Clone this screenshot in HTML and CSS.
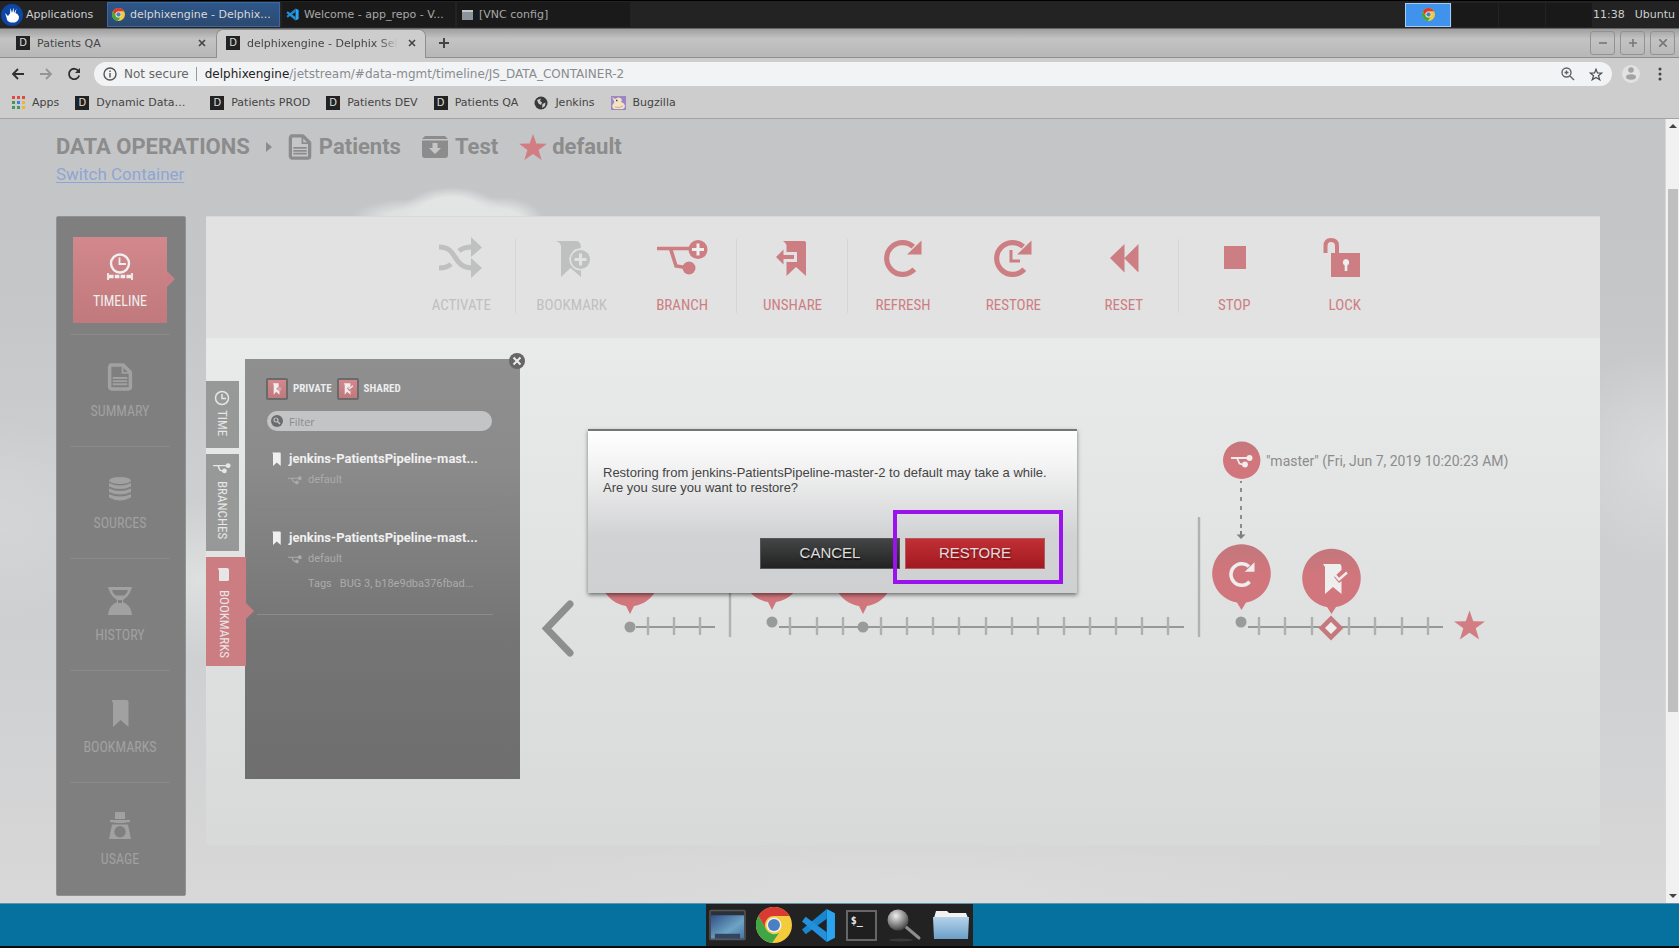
FILE: index.html
```html
<!DOCTYPE html>
<html lang="en">
<head>
<meta charset="utf-8">
<title>delphixengine - Delphix Self-Service</title>
<link rel="stylesheet" href="styles.css">
</head>
<body>
<svg class="defs" width="0" height="0" aria-hidden="true">
  <defs>
    <linearGradient id="pin" x1="0" y1="0" x2="0" y2="1"><stop offset="0" stop-color="#c3777c"/><stop offset=".45" stop-color="#d1767c"/><stop offset="1" stop-color="#d1767c"/></linearGradient>
    <linearGradient id="desk" x1="0" y1="0" x2="1" y2="1"><stop offset="0" stop-color="#2f4f86"/><stop offset=".6" stop-color="#6ea3c4"/><stop offset="1" stop-color="#4772a4"/></linearGradient>
    <linearGradient id="folder" x1="0" y1="0" x2="0" y2="1"><stop offset="0" stop-color="#b5d3ea"/><stop offset="1" stop-color="#6b9fc9"/></linearGradient>
    <radialGradient id="lens" cx=".4" cy=".3" r=".7"><stop offset="0" stop-color="#eee"/><stop offset=".6" stop-color="#8a8a8a"/><stop offset="1" stop-color="#444"/></radialGradient>
    <symbol id="chrome" viewBox="0 0 36 36">
      <circle cx="18" cy="18" r="18" fill="#f3cb3c"/>
      <path d="M2.4 9A18 18 0 0 1 33.6 9H18a9 9 0 0 0-7.8 13.500Z" fill="#db3a33"/>
      <path d="M2.400 9 10.200 22.500a9 9 0 0 0 13 3.200L16 35.900A18 18 0 0 1 2.400 9Z" fill="#3fa648"/>
      <circle cx="18" cy="18" r="7.500" fill="#f1f1f1"/><circle cx="18" cy="18" r="6" fill="#4a7fc4"/>
    </symbol>
    <symbol id="vscode" viewBox="0 0 34 34">
      <path d="M25 1 33 5V29L25 33Z" fill="#2aa4ee"/>
      <path d="M25 1 1 21 4.500 25.500 25 10.500Z" fill="#1a86cf"/>
      <path d="M25 33 1 13 4.500 8.500 25 23.500Z" fill="#2290da"/>
    </symbol>
    <symbol id="doc" viewBox="0 0 24 27">
      <path d="M3 2H15L22 9V23a2 2 0 0 1-2 2H4a2 2 0 0 1-2-2V4Z" fill="none" stroke="currentColor" stroke-width="3.400" stroke-linejoin="round"/>
      <path d="M14.500 3V9.500H21" fill="none" stroke="currentColor" stroke-width="1.800"/>
      <path d="M5 14.500H19M5 17.500H19M5 20.500H19" stroke="currentColor" stroke-width="1.800"/>
    </symbol>
    <symbol id="star" viewBox="0 0 30 28"><path d="M15 0 18.600 10.300 30 10.600 21 17.200 24.300 28 15 21.500 5.700 28 9 17.200 0 10.600 11.400 10.300Z" fill="currentColor"/></symbol>
    <symbol id="branch" viewBox="0 0 22 13">
      <path d="M0 3H17M6 3 8.500 8.500 13 10" fill="none" stroke="currentColor" stroke-width="1.800"/>
      <circle cx="18.500" cy="3" r="3" fill="currentColor"/><circle cx="14" cy="9.500" r="2.900" fill="currentColor"/>
    </symbol>
    <symbol id="mark" viewBox="0 0 17 28"><path d="M0 1H15Q17 1 17 3V28L9 21 1.500 28V4Z" fill="currentColor"/></symbol>
    <symbol id="redo" viewBox="0 0 37 36"><path d="M29.500 28.500A15.500 15.500 0 1 1 28.500 6.500" fill="none" stroke="currentColor" stroke-width="5"/><path d="M36.500 .5V14H22.500Z" fill="currentColor"/></symbol>
  </defs>
</svg>

<header class="topbar">
  <button class="apps">
    <svg width="22" height="22" viewBox="0 0 22 22"><circle cx="11" cy="11" r="11" fill="#0d47a6"/><path d="M4 9 5.500 13.500Q6 18 10 18.500H14Q18 17 18 12.500 17 9.500 14.500 9L15.500 4.500 13 9 12.500 3.500 11 9 9.500 4 9 9.500 7 12Z" fill="#fff"/></svg>
    Applications</button>
  <nav class="tasks">
    <button class="task on"><svg width="13" height="13"><use href="#chrome"/></svg><span>delphixengine - Delphix...</span></button>
    <button class="task"><svg width="13" height="13"><use href="#vscode"/></svg><span>Welcome - app_repo - V...</span></button>
    <button class="task"><svg width="13" height="12" viewBox="0 0 13 12"><rect x="1" y="1" width="11" height="10" fill="#8b949c"/><rect x="1" y="1" width="11" height="2" fill="#c5c9cc"/></svg><span>[VNC config]</span></button>
  </nav>
  <div class="pager"><button class="desk on" aria-label="Workspace 1"><svg width="13" height="13"><use href="#chrome"/></svg></button><button class="desk" aria-label="Workspace 2"></button><button class="desk" aria-label="Workspace 3"></button><button class="desk" aria-label="Workspace 4"></button></div>
  <span class="clock">11:38</span><span class="user">Ubuntu</span>
</header>

<div class="tabstrip">
  <div class="tab"><i class="d">D</i><span>Patients QA</span><button class="x" aria-label="Close tab"><svg width="8" height="8" viewBox="0 0 8 8"><path d="M1 1 7 7M7 1 1 7"/></svg></button></div>
  <div class="tab active"><i class="d">D</i><span>delphixengine - Delphix Self</span><button class="x" aria-label="Close tab"><svg width="8" height="8" viewBox="0 0 8 8"><path d="M1 1 7 7M7 1 1 7"/></svg></button></div>
  <button class="plus" aria-label="New tab"><svg width="12" height="12" viewBox="0 0 12 12"><path d="M6 1V11M1 6H11"/></svg></button>
  <div class="winbtns">
    <button aria-label="Minimize"><svg width="8" height="8" viewBox="0 0 8 8"><path d="M0 4H8"/></svg></button>
    <button aria-label="Maximize"><svg width="8" height="8" viewBox="0 0 8 8"><path d="M0 4H8M4 0V8"/></svg></button>
    <button aria-label="Close"><svg width="8" height="8" viewBox="0 0 8 8"><path d="M0 0 8 8M8 0 0 8"/></svg></button>
  </div>
</div>

<div class="navbar">
  <button class="nav" aria-label="Back"><svg width="14" height="12" viewBox="0 0 14 12"><path d="M13 6H2M7 1 2 6 7 11"/></svg></button>
  <button class="nav dim" aria-label="Forward"><svg width="14" height="12" viewBox="0 0 14 12"><path d="M1 6H12M7 1 12 6 7 11"/></svg></button>
  <button class="nav" aria-label="Reload"><svg width="14" height="14" viewBox="0 0 14 14"><path d="M11.500 4A5.200 5.200 0 1 0 12.200 8.500"/><path d="M13 1V6H8Z" fill="#2f2f2f" stroke="none"/></svg></button>
  <div class="omni">
    <svg width="14" height="14" viewBox="0 0 14 14" fill="none" stroke="#555" stroke-width="1.400"><circle cx="7" cy="7" r="6"/><path d="M7 6V10.500M7 3.500V5"/></svg>
    <span class="sec">Not secure</span><span class="url"><b>delphixengine</b>/jetstream/#data-mgmt/timeline/JS_DATA_CONTAINER-2</span>
    <svg width="14" height="14" viewBox="0 0 14 14" fill="none" stroke="#5f6368" stroke-width="1.400"><circle cx="5.500" cy="5.500" r="4.500"/><path d="M9 9 13 13M3.500 5.500H7.500M5.500 3.500V7.500"/></svg>
    <svg width="14" height="13" viewBox="-2 -2 34 32" fill="none" stroke="#4a4d52" stroke-width="3"><path d="M15 1 18.600 10.300 29 10.600 21 17.200 24.300 27 15 21.500 5.700 27 9 17.200 1 10.600 11.400 10.300Z"/></svg>
  </div>
  <svg class="avatar" width="18" height="18" viewBox="0 0 18 18"><circle cx="9" cy="9" r="9" fill="#e2e2e2"/><circle cx="9" cy="5" r="2.800" fill="#a3a3a3"/><ellipse cx="9" cy="12" rx="5" ry="2.800" fill="#a3a3a3"/></svg>
  <svg width="4" height="14" viewBox="0 0 4 14" fill="#444"><circle cx="2" cy="2" r="1.500"/><circle cx="2" cy="7" r="1.500"/><circle cx="2" cy="12" r="1.500"/></svg>
</div>

<nav class="bookbar">
  <a href="#"><svg width="13" height="13" viewBox="0 0 13 13"><g fill="#e04a3f"><path d="M0 0H3V3H0ZM5 0H8V3H5ZM10 0H13V3H10Z"/></g><path d="M0 5H3V8H0ZM0 10H3V13H0ZM5 10H8V13H5Z" fill="#3c9b55"/><path d="M5 5H8V8H5Z" fill="#3f7fe8"/><path d="M10 5H13V8H10ZM10 10H13V13H10Z" fill="#f1b52b"/></svg>Apps</a>
  <a href="#" class="wide"><i class="d">D</i>Dynamic Data…</a>
  <a href="#"><i class="d">D</i>Patients PROD</a>
  <a href="#"><i class="d">D</i>Patients DEV</a>
  <a href="#"><i class="d">D</i>Patients QA</a>
  <a href="#"><svg width="14" height="14" viewBox="0 0 14 14"><circle cx="7" cy="7" r="6.500" fill="#3a3a3a"/><path d="M3 4 7 2.500 6 5 8 6.500 7 9 4.500 7.500ZM8.500 8 11.500 6.500 11 10 8 12Z" fill="#ccc"/></svg>Jenkins</a>
  <a href="#"><svg width="15" height="14" viewBox="0 0 15 14"><rect width="15" height="14" fill="#9b86c8"/><path d="M1 1 4 3 7 1.500Q10 1 11 4L10 6Q14 7 14 11L12 13H3Q0 11 2 8 4 7 3 5Z" fill="#f3e3c4"/><path d="M5 4.500H6.500" stroke="#543" stroke-width="1.300"/><path d="M4 11Q8 12.500 12 10" stroke="#c9b183" fill="none"/></svg>Bugzilla</a>
</nav>

<div class="view">
<main class="page">
  <div class="crumbs">
    <span>DATA OPERATIONS</span>
    <svg class="tri" width="6" height="10" viewBox="0 0 6 10"><path d="M0 0 6 5 0 10Z" fill="currentColor"/></svg>
    <svg class="cdoc" width="24" height="26"><use href="#doc"/></svg><span>Patients</span>
    <svg class="cbox" width="26" height="22" viewBox="0 0 26 22"><path d="M3 0H23L26 3H0ZM0 4.500H26V19a3 3 0 0 1-3 3H3a3 3 0 0 1-3-3Z" fill="currentColor"/><path d="M10.500 7H15.500V12H19L13 18 7 12H10.500Z" fill="#c5c6c7"/></svg><span>Test</span>
    <svg class="cstar" width="28" height="26"><use href="#star"/></svg><span>default</span>
  </div>
  <a href="#" class="switch">Switch Container</a>

  <div class="cols">
    <nav class="side">
      <button class="sel"><svg width="26" height="28" viewBox="0 0 26 28" fill="none" stroke="currentColor"><circle cx="13" cy="10.500" r="9" stroke-width="2.400"/><path d="M12.500 4.500V11H19" stroke-width="1.800"/><path d="M1 20V27M25 20V27" stroke-width="1.800"/><path d="M2 23.500H24" stroke-width="3.600" stroke-dasharray="4.600 1.200"/></svg>TIMELINE</button>
      <button><svg width="26" height="28"><use href="#doc"/></svg>SUMMARY</button>
      <button><svg width="26" height="28" viewBox="0 0 26 28" fill="currentColor"><ellipse cx="13" cy="5.500" rx="11" ry="3.500"/><path d="M2 8Q13 13 24 8V11.500Q13 16.500 2 11.500ZM2 13.500Q13 18.500 24 13.500V17Q13 22 2 17ZM2 19Q13 24 24 19V22.500Q13 28.500 2 22.500Z"/></svg>SOURCES</button>
      <button><svg width="26" height="28" viewBox="0 0 26 28" fill="currentColor"><path fill-rule="evenodd" d="M1 0H25L24 3Q22 9 16 13V15Q23 18 24.500 25L25 28H1L1.500 25Q3 18 10 15V13Q4 9 2 3ZM5 3Q6 7 8.500 8.500H17.500Q20 7 21 3ZM11 13V16H15V13Z"/></svg>HISTORY</button>
      <button><svg width="26" height="28"><use href="#mark"/></svg>BOOKMARKS</button>
      <button><svg width="26" height="28" viewBox="0 0 26 28" fill="currentColor"><path d="M8 1H18V8H8ZM3 9H23V11L15 12H11L3 11Z"/><path fill-rule="evenodd" d="M5 13.500H21L24 28H2ZM13 15A5.700 5.700 0 1 0 13 26.400 5.700 5.700 0 1 0 13 15Z"/></svg>USAGE</button>
    </nav>

    <section class="work">
      <div class="tools">
        <button class="off sep"><svg width="44" height="44" viewBox="0 0 44 44"><path d="M0 11C20 11 12 32 34 32M0 32Q8 32 12 28M20 15Q24 11 34 11" fill="none" stroke="currentColor" stroke-width="5"/><path d="M32 1 43 11.500 32 21ZM32 22 43 32 32 42Z" fill="currentColor"/></svg>ACTIVATE</button>
        <button class="off"><svg width="44" height="44" viewBox="3 0 44 44"><path d="M9 5H30Q34 6 34 12L27 14 22 23 28 31 34 33V41L23.500 32 14 41V10Q13 6 9 5Z" fill="currentColor"/><circle cx="33.500" cy="23.500" r="11" fill="#e2e2e2"/><circle cx="33.500" cy="23.500" r="9.500" fill="currentColor"/><path d="M33.500 17.500V29.500M27.500 23.500H39.500" stroke="#e2e2e2" stroke-width="3"/></svg>BOOKMARK</button>
        <button class="sep"><svg width="52" height="44" viewBox="0 0 52 44"><path d="M1 12.500H34M14.500 12.500 20 30 33 32" fill="none" stroke="currentColor" stroke-width="3.600"/><circle cx="42" cy="13.500" r="9.500" fill="currentColor"/><circle cx="33" cy="32" r="6.500" fill="currentColor"/><path d="M42 7.500V19.500M36 13.500H48" stroke="#eee" stroke-width="3"/></svg>BRANCH</button>
        <button class="sep"><svg width="44" height="44" viewBox="2 0 44 44"><path d="M14 5H35Q37 5 37 7V40L27 31 17.500 40V26H28V16H17.500V9Q16 6 14 5Z" fill="currentColor"/><path d="M7 21 14.500 13.500V19H25V23H14.500V28.500Z" fill="currentColor"/></svg>UNSHARE</button>
        <button><svg width="38" height="44" viewBox="0 -4 38 44"><use href="#redo" width="38" height="37"/></svg>REFRESH</button>
        <button><svg width="38" height="44" viewBox="0 -4 38 44"><use href="#redo" width="38" height="37"/><path d="M17 10V21H26" fill="none" stroke="currentColor" stroke-width="3"/></svg>RESTORE</button>
        <button class="sep"><svg width="30" height="44" viewBox="0 0 30 44"><path d="M15.500 8V22L29.500 8V36.500L15.500 22.500V36.500L1 22Z" fill="currentColor"/></svg>RESET</button>
        <button><svg width="44" height="44" viewBox="0 0 44 44"><path d="M12 10H34V33H12Z" fill="currentColor"/></svg>STOP</button>
        <button><svg width="44" height="44" viewBox="4 0 44 44"><path d="M6.500 17V10Q6.500 4 12 4 18 4 18 10V18" fill="none" stroke="currentColor" stroke-width="4"/><path d="M12 17H41V41H12Z" fill="currentColor"/><path d="M27 23a3.500 3.500 0 0 1 1.300 6.600V35H25.700V29.600A3.500 3.500 0 0 1 27 23Z" fill="#eee"/></svg>LOCK</button>
      </div>

      <div class="stage">
        <div class="vtabs">
          <button class="t1"><svg width="16" height="16" viewBox="0 0 16 16" fill="none" stroke="currentColor" stroke-width="1.500"><circle cx="8" cy="8" r="6.500"/><path d="M8 4V8.500H12"/></svg>TIME</button>
          <button class="t2"><svg width="18" height="11"><use href="#branch"/></svg>BRANCHES</button>
          <button class="t3"><svg width="12" height="14" viewBox="0 0 12 14"><path d="M0 0H9Q11 0 11 2V12L10 13H1V3Z" fill="currentColor"/></svg>BOOKMARKS</button>
        </div>
        <aside class="panel">
          <button class="close" aria-label="Close panel"><svg width="16" height="16" viewBox="0 0 16 16"><circle cx="8" cy="8" r="8" fill="#666"/><path d="M4.500 4.500 11.500 11.500M11.500 4.500 4.500 11.500" stroke="#ececec" stroke-width="2"/></svg></button>
          <div class="kinds">
            <button><svg width="22" height="22" viewBox="0 0 22 22"><path d="M6 4H13V8L10 11 14 13V18L10 14.500 7 18V6Z" fill="#eee"/><circle cx="14" cy="11" r="2.500" fill="#dba5a8"/></svg>PRIVATE</button>
            <button><svg width="22" height="22" viewBox="0 0 22 22"><path d="M6 4H14V18L10 14.500 7 18V6Z" fill="#eee"/><path d="M11 9 13 11.500 17 7.500" fill="none" stroke="#c98286" stroke-width="3.400"/><path d="M11.500 9 13 10.500 17 7" fill="none" stroke="#eee" stroke-width="1.600"/></svg>SHARED</button>
          </div>
          <label class="filter"><svg width="12" height="12" viewBox="0 0 12 12"><circle cx="6" cy="6" r="6" fill="#6c6c6c"/><circle cx="5" cy="5" r="2" fill="none" stroke="#c3c4c5" stroke-width="1.200"/><path d="M6.500 6.500 9 9" stroke="#c3c4c5" stroke-width="1.400"/></svg><input type="text" placeholder="Filter" aria-label="Filter bookmarks"></label>
          <article>
            <h3><svg width="9" height="14"><use href="#mark"/></svg>jenkins-PatientsPipeline-mast...</h3>
            <p><svg width="14" height="9"><use href="#branch"/></svg>default</p>
          </article>
          <article class="second">
            <h3><svg width="9" height="14"><use href="#mark"/></svg>jenkins-PatientsPipeline-mast...</h3>
            <p><svg width="14" height="9"><use href="#branch"/></svg>default</p>
            <p class="tags"><span>Tags</span><span>BUG 3, b18e9dba376fbad...</span></p>
          </article>
        </aside>
        <svg class="timeline" viewBox="206 338 1394 507" preserveAspectRatio="xMinYMin meet">
          <path d="M570 604 546.500 628.500 570 653" fill="none" stroke="#8e8e8e" stroke-width="7" stroke-linecap="round"/>
          <path d="M730 517V637M1199 517V637" stroke="#b0b1b1" stroke-width="2.400"/>
          <path d="M636 627H715M779 627H1184M1248 627H1443" stroke="#969797" stroke-width="2"/>
          <path d="M648 617V635M674 617V635M700 617V635M790 617V635M817 617V635M843 617V635M881 617V635M907 617V635M933 617V635M959 617V635M986 617V635M1012 617V635M1038 617V635M1064 617V635M1090 617V635M1116 617V635M1142 617V635M1168 617V635M1259 617V635M1285 617V635M1312 617V635M1349 617V635M1375 617V635M1402 617V635M1428 617V635" stroke="#aeafaf" stroke-width="2.400"/>
          <g fill="#999a9a"><circle cx="630" cy="627" r="5.500"/><circle cx="772" cy="622" r="5.500"/><circle cx="863" cy="627" r="5.500"/><circle cx="1241" cy="622" r="5.500"/></g>
          <g fill="url(#pin)">
            <path d="M626 606A29 29 0 1 1 634 606L630 614Z"/>
            <path d="M768 602A29 29 0 1 1 776 602L772 610Z"/>
            <path d="M859 606A29 29 0 1 1 867 606L863 614Z"/>
            <path d="M1237 602.500A29.300 29.300 0 1 1 1246 602.500L1241.500 610Z"/>
            <path d="M1327 607A29.300 29.300 0 1 1 1336 607L1331.500 614Z"/>
            <circle cx="1241.700" cy="460.300" r="18.700"/>
          </g>
          <path d="M1331 615.500 1343.500 628 1331 640.500 1318.500 628Z" fill="#c4797e"/><path d="M1331 622 1337 628 1331 634 1325 628Z" fill="#eee"/>
          <g color="#eee"><use href="#branch" x="1231" y="455" width="22" height="13"/><use href="#redo" x="1229" y="562" width="26" height="25"/></g>
          <path d="M1323 564H1340Q1341.500 565 1341.500 567V570L1334 577 1339 583 1341.500 581V594L1333 587 1325 594V567Z" fill="#eee"/><path d="M1335 575 1339 579.500 1347 572.500" fill="none" stroke="#eee" stroke-width="2.400"/>
          <path d="M1241 481V532" stroke="#8b8c8c" stroke-width="2" stroke-dasharray="4 5" stroke-dashoffset="2"/><path d="M1236.500 534.500H1245.500L1241 539Z" fill="#7e7f7f"/><path d="M1241 531V537" stroke="#7e7f7f" stroke-width="2"/>
          <g color="#d17d82"><use href="#star" x="1454" y="610" width="31" height="30"/></g>
          <text x="1266" y="466">"master" (Fri, Jun 7, 2019 10:20:23 AM)</text>
        </svg>
      </div>
    </section>
  </div>
</main>
<div class="scroll" aria-hidden="true"><svg width="8" height="4" viewBox="0 0 8 4"><path d="M0 4 4 0 8 4Z" fill="#444"/></svg><span></span><svg width="8" height="4" viewBox="0 0 8 4"><path d="M0 0 4 4 8 0Z" fill="#444"/></svg></div>
</div>

<div class="modal" role="dialog" aria-label="Restore">
  <p>Restoring from jenkins-PatientsPipeline-master-2 to default may take a while.<br>Are you sure you want to restore?</p>
  <div class="acts"><button>CANCEL</button><button class="go">RESTORE</button></div>
  <div class="mark"></div>
</div>

<footer class="dockbar">
  <div class="dock">
    <button aria-label="Show desktop"><svg width="37" height="34" viewBox="0 0 38 34"><rect x="1" y="2" width="36" height="30" rx="1" fill="#2c3038" stroke="#555" stroke-width="1.500"/><rect x="2" y="7" width="34" height="24" fill="url(#desk)"/><rect x="6" y="26" width="26" height="5" fill="#33455e"/></svg></button>
    <button aria-label="Chrome"><svg width="36" height="36"><use href="#chrome"/></svg></button>
    <button aria-label="Code"><svg width="35" height="35"><use href="#vscode"/></svg></button>
    <button aria-label="Terminal" class="term">$_</button>
    <button aria-label="Search"><svg width="36" height="34" viewBox="0 0 36 34"><path d="M20 19 33 30" stroke="#8d8d8d" stroke-width="3" stroke-linecap="round"/><circle cx="12" cy="12" r="10.500" fill="url(#lens)"/><ellipse cx="15" cy="32" rx="12" ry="1.500" fill="#3a3a3a"/></svg></button>
    <button aria-label="Files"><svg width="38" height="32" viewBox="0 0 38 32"><path d="M2 9 4 2H15L17 4H34L36 9Z" fill="#f2f2f2"/><path d="M1 8H37L36 30H2Z" fill="url(#folder)"/></svg></button>
  </div>
</footer>
</body>
</html>
```
FILE: styles.css
```css
* { box-sizing: border-box; }
body {
  margin: 0;
  min-height: 100vh;
  display: flex;
  flex-direction: column;
  position: relative;
  font-family: Roboto, "Open Sans", sans-serif;
  background: #111;
}
button { border: 0; padding: 0; margin: 0; background: none; font: inherit; color: inherit; }
h3, p { margin: 0; }
svg { display: block; flex: none; }
.defs { position: absolute; }

/* desktop top bar */
.topbar {
  height: 28px;
  flex: none;
  display: flex;
  align-items: center;
  border-top: 1px solid #000;
  background: #232323;
  color: #cfcfcf;
  font: 11px "DejaVu Sans", sans-serif;
}
.apps { display: flex; align-items: center; gap: 3px; width: 107px; padding-left: 1px; }
.tasks { display: flex; gap: 2px; flex: 1; height: 100%; padding: 1px 0; }
.task { width: 173px; padding: 0 0 0 4px; display: flex; align-items: center; gap: 5px; background: #1a1a1a; color: #a8a8a8; white-space: nowrap; overflow: hidden; }
.task.on { background: linear-gradient(#2e568a, #2c4a70); color: #d8d8d8; border: 1px solid #396aa5; }
.pager { display: flex; gap: 1px; height: 24px; }
.desk { width: 46px; background: #191919; display: flex; align-items: center; justify-content: center; }
.desk.on { background: #4093ec; border: 1px solid #a9cdf2; }
.clock { margin-left: 1px; }
.user { margin: 0 4px 0 10px; }

/* browser chrome */
.tabstrip, .navbar, .bookbar { font-family: "DejaVu Sans", sans-serif; flex: none; display: flex; align-items: center; }
.tabstrip {
  height: 30px;
  font-size: 11px;
  color: #444;
  background: linear-gradient(#9f9f9f, #c3c3c3 35%, #b7b7b7);
  border-bottom: 1px solid #8f8f8f;
  align-items: flex-end;
  border-top: 1px solid #666;
}
.tab { width: 216px; height: 28px; padding: 0 10px 0 16px; display: flex; align-items: center; gap: 7px; }
.tab span { flex: 1; overflow: hidden; white-space: nowrap; }
.tab.active {
  width: 210px;
  height: 29px;
  margin-bottom: -1px;
  padding: 0 9px 2px 9px;
  background: #cdcdcd;
  border: 1px solid #8f8f8f;
  border-bottom: 0;
  border-radius: 7px 7px 0 0;
}
.tab.active span { -webkit-mask-image: linear-gradient(90deg, #000 86%, transparent 98%); mask-image: linear-gradient(90deg, #000 86%, transparent 98%); }
.d { flex: none; width: 14px; height: 14px; background: #222; color: #ddd; font: 10px/14px "DejaVu Sans", sans-serif; text-align: center; }
.x svg, .plus svg { fill: none; stroke: #444; stroke-width: 1.6; }
.plus svg { stroke-width: 2; }
.plus { margin-left: 12px; height: 28px; flex: none; }
.winbtns { margin-left: auto; display: flex; gap: 5px; padding: 0 4px 1px 0; align-self: center; }
.winbtns button { width: 25px; height: 24px; border: 1px solid #929292; border-radius: 3px; display: flex; align-items: center; justify-content: center; }
.winbtns svg { stroke: #777; stroke-width: 1.6; fill: none; }
.navbar { height: 32px; background: #cdcdcd; padding: 0 17px 0 11px; font-size: 12px; }
.nav { width: 28px; display: flex; }
.nav:nth-child(3) { width: 27px; }
.nav svg { fill: none; stroke: #2f2f2f; stroke-width: 1.8; }
.nav.dim svg { stroke: #959595; }
.omni { flex: 1; height: 24px; border-radius: 12px; background: #f2f3f5; display: flex; align-items: center; padding: 0 9px; }
.sec { margin-left: 7px; padding-right: 7px; border-right: 1px solid #999; color: #666; white-space: nowrap; }
.url { flex: 1; margin-left: 8px; color: #888c91; white-space: nowrap; }
.url b { font-weight: 400; color: #222; }
.omni svg:last-child { margin-left: 14px; }
.avatar { margin: 0 18px 0 10px; }
.bookbar { height: 29px; background: #cdcdcd; padding: 0 12px 3px; gap: 16px; font-size: 11px; border-bottom: 1px solid #a2a5a3; }
.bookbar a { display: flex; align-items: center; gap: 7px; color: #444; text-decoration: none; white-space: nowrap; }
.bookbar .wide { width: 119px; }

/* application */
.view { flex: 1; display: flex; min-height: 0; }
.page {
  flex: 1;
  min-width: 0;
  padding: 16px 65px 0 56px;
  background:
    radial-gradient(ellipse 54px 32px at 452px 100px, #e3e4e4 68%, rgba(227,228,228,0)),
    radial-gradient(ellipse 44px 24px at 500px 102px, #e2e3e3 50%, rgba(226,227,227,0)),
    radial-gradient(ellipse 60px 20px at 412px 100px, #dfe0e0 45%, rgba(223,224,224,0)),
    radial-gradient(ellipse 120px 100px at 0 400px, rgba(222,223,224,.4), rgba(220,221,222,0)),
    radial-gradient(ellipse 90px 80px at 200px 460px, rgba(226,227,227,.8), rgba(220,221,222,0)),
    radial-gradient(ellipse 110px 110px at 1665px 340px, rgba(220,221,222,.8), rgba(220,221,222,0)),
    radial-gradient(ellipse 420px 50px at 900px 770px, rgba(226,226,227,.4), rgba(226,226,227,0)),
    linear-gradient(#c4c5c7 0%, #c5c6c8 22%, #cdcecf 45%, #cfd0d1 70%, #d8d8d9 100%);
}
.crumbs { display: flex; align-items: center; height: 24px; color: #8c8c8c; font-size: 22px; font-weight: 700; line-height: 24px; }
.tri { margin: 0 16px; }
.cdoc { margin-right: 7px; }
.cbox { margin: 0 7px 0 21px; }
.cstar { margin: 0 5px 0 21px; color: #d17d82; }
.switch { display: inline-block; color: #8da6d3; font-size: 17px; line-height: 22px; margin-top: 4px; text-underline-offset: 2px; }
.cols { display: flex; gap: 20px; align-items: flex-start; margin-top: 31px; }
.side { width: 130px; flex: none; background: #7f7f7f; border: 1px solid #919191; border-radius: 2px; padding: 5px 15px 1px 13px; }
.side button { position: relative; width: 100%; height: 112px; display: flex; flex-direction: column; align-items: center; justify-content: center; gap: 12px; color: #a1a1a1; font: 14px/16px "Roboto Condensed", Roboto, sans-serif; border-top: 1px solid #8a8a8a; }
.side .sel { width: 94px; height: 86px; margin: 15px 3px 11px; padding-top: 1px; color: #efefef; border: 0; background: linear-gradient(#d2888c, #c0797c); }
.side .sel::after { content: ""; position: absolute; left: 100%; top: 34px; border: 8px solid transparent; border-left-color: #c98084; border-right: 0; }
.work { flex: 1; min-width: 0; height: 629px; display: flex; flex-direction: column; }
.tools { background: #e2e2e2; height: 122px; display: flex; justify-content: center; border-top: 1px solid #d8d8d8; padding: 16px 200px 0; }
.tools button { position: relative; flex: 1; height: 84px; display: flex; flex-direction: column; align-items: center; gap: 17px; padding-top: 3px; color: #cc7e82; font: 15px/16px "Roboto Condensed", Roboto, sans-serif; }
.tools .off { color: #bfc0c0; }
.tools .sep { background: linear-gradient(#d6d6d6, #d6d6d6) right 6px / 1px 74px no-repeat; }
.stage { position: relative; flex: 1; display: flex; background: linear-gradient(#e9eaea, #d8dada); }
.vtabs { width: 39px; padding-top: 43px; position: relative; z-index: 2; }
.vtabs button { display: flex; align-items: center; width: 33px; writing-mode: vertical-rl; background: #979898; color: #e6e6e6; font: 13px/14px "Roboto Condensed", Roboto, sans-serif; margin-bottom: 6px; padding: 9px 2px 0 0; gap: 4px; }
.vtabs .t1 { height: 67px; }
.vtabs .t2 { height: 97px; gap: 7px; }
.vtabs .t3 { position: relative; width: 40px; height: 109px; background: #cc7d81; padding: 11px 5px 0 0; gap: 8px; }
.vtabs .t3::after { content: ""; position: absolute; left: 100%; top: 46px; border: 8px solid transparent; border-left-color: #cc7d81; border-right: 0; }
.panel { position: relative; z-index: 1; width: 275px; height: 420px; margin-top: 21px; padding: 19px 27px 0 12px; background: linear-gradient(#8f8f8f, #8b8b8b 25%, #757575 65%, #6e6e6e); }
.close { position: absolute; right: -5px; top: -6px; }
.kinds { display: flex; gap: 5px; padding-left: 9px; }
.kinds button { display: flex; align-items: center; gap: 5px; color: #ececec; font: 700 11px/12px "Roboto Condensed", Roboto, sans-serif; }
.kinds svg { background: linear-gradient(#d2888c, #c0797c); border: 2px solid #6a6a6a; border-radius: 2px; }
.filter { display: flex; align-items: center; gap: 6px; height: 20px; margin: 11px 1px 0 10px; padding-left: 4px; border-radius: 10px; background: #c3c4c6; }
.filter input { flex: 1; min-width: 0; border: 0; padding: 0; background: none; font: 11px "Open Sans", sans-serif; }
.filter input::placeholder { color: #8c8c8c; }
article { height: 79px; padding: 18px 0 0 15px; border-bottom: 1px solid #838383; }
article.second { height: 105px; border-color: #8c8c8c; }
article h3 { display: flex; align-items: center; gap: 8px; color: #f0f0f0; font-size: 13px; line-height: 20px; white-space: nowrap; }
article p { display: flex; align-items: center; gap: 6px; padding-left: 16px; color: #ababab; font-size: 11px; line-height: 22px; }
article .tags { gap: 8px; padding-left: 36px; line-height: 28px; white-space: nowrap; }
.timeline { position: absolute; inset: 0; width: 100%; height: 100%; }
.timeline text { font: 14px Roboto, sans-serif; fill: #8c8c8c; }
.scroll { flex: none; width: 14px; background: #f1f1f1; border-left: 1px solid #d8d8d8; padding: 5px 1px; display: flex; flex-direction: column; align-items: center; }
.scroll span { width: 10px; margin-top: 61px; flex: 1; background: #bfbfbf; margin-bottom: 182px; }

/* dialog */
.modal {
  position: absolute;
  z-index: 5;
  left: 588px;
  top: 429px;
  width: 489px;
  padding: 34px 32px 24px 15px;
  border-top: 2px solid #757575;
  background: linear-gradient(#fff, #f4f4f4 20%, #d1d2d4 65%, #cfd0d1);
  box-shadow: 0 2px 4px rgba(0,0,0,.5);
  color: #444;
  font: 13px/15px "Liberation Sans", Arial, sans-serif;
}
.modal p { white-space: nowrap; }
.acts { display: flex; justify-content: flex-end; gap: 5px; margin-top: 43px; }
.acts button { width: 140px; height: 31px; padding-bottom: 3px; background: linear-gradient(#444546, #222); border: 1px solid #555; color: #ddd; font: 15px "Liberation Sans", Arial, sans-serif; text-shadow: 1px 2px 1px #111; }
.acts .go { background: linear-gradient(#c03036, #a2191f); border-color: #b7575b; text-shadow: 1px 2px 1px #7c1015; }
.mark { position: absolute; right: 14px; bottom: 9px; width: 170px; height: 74px; border: 4px solid #9a12ec; pointer-events: none; }

/* dock */
.dockbar { flex: none; height: 45px; background: #06719f; border-top: 1px solid #5b96ad; border-bottom: 2px solid #0a0a0a; display: flex; justify-content: center; }
.dock { width: 267px; display: flex; align-items: center; justify-content: space-between; padding: 0 3px; background: #222; }
.term { width: 31px; height: 31px; border: 2px solid #666; background: #1f1f1f; color: #e8e8e8; font: 700 10px/14px "DejaVu Sans Mono", monospace; text-align: left; padding: 0 0 8px 3px; }
```
